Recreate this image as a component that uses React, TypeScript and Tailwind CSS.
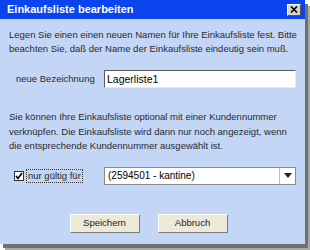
import { useState } from 'react';

export default function App() {
  const [name, setName] = useState('Lagerliste1');
  const [onlyFor, setOnlyFor] = useState(true); // Kundennummer-Filter aktiv

  return (
    <div className="w-[310px] h-[250px] bg-white font-['Liberation_Sans',Arial,sans-serif] text-[9.5px] text-[#2a2a2a]">
      <div className="w-[305px] h-[244px] flex flex-col bg-[#c3d6f6] shadow-[3px_4px_0_#707070,5px_6px_0_#a8a8a8]">
        {/* Title bar */}
        <div className="h-[19px] flex items-center justify-between bg-[#0a44ec] pl-[7px] pr-[4px]">
          <span className="text-white font-bold text-[11px] leading-none">Einkaufsliste bearbeiten</span>
          <button className="w-[14px] h-[12px] flex items-center justify-center bg-[#d6d3ce] border border-t-white border-l-white border-b-[#555] border-r-[#555]">
            <svg width="8" height="7" viewBox="0 0 8 7">
              <path d="M1 0.5 L7 6.5 M7 0.5 L1 6.5" stroke="#000" strokeWidth="1.6" />
            </svg>
          </button>
        </div>

        {/* Body */}
        <div className="flex flex-col px-[9px]">
          <p className="mt-[9px] leading-[14px] whitespace-nowrap">
            Legen Sie einen einen neuen Namen für Ihre Einkaufsliste fest. Bitte
            <br />
            beachten Sie, daß der Name der Einkaufsliste eindeutig sein muß.
          </p>

          <div className="mt-[14px] flex items-center h-[18px]">
            <span className="w-[95px] pl-[7px] whitespace-nowrap">neue Bezeichnung</span>
            <input
              value={name}
              onChange={(e) => setName(e.target.value)}
              className="w-[192px] h-[18px] bg-white px-[2px] text-[10.5px] text-black outline-none border-[1.5px] border-t-[#5a5a5a] border-l-[#5a5a5a] border-b-[#e8e8e8] border-r-[#e8e8e8]"
            />
          </div>

          <p className="mt-[22px] leading-[14.5px] whitespace-nowrap">
            Sie können Ihre Einkaufsliste optional mit einer Kundennummer
            <br />
            verknüpfen. Die Einkaufsliste wird dann nur noch angezeigt, wenn
            <br />
            die entsprechende Kundennummer ausgewählt ist.
          </p>

          <div className="mt-[13px] flex items-center h-[18px]">
            <div className="w-[95px] flex items-center pl-[5px]">
              <button
                onClick={() => setOnlyFor(!onlyFor)}
                className="w-[10px] h-[10px] bg-white border border-[#333] flex items-center justify-center"
              >
                {onlyFor && (
                  <svg width="8" height="8" viewBox="0 0 8 8">
                    <path d="M1 4 L3 6.5 L7 1" fill="none" stroke="#000" strokeWidth="1.6" />
                  </svg>
                )}
              </button>
              <span className="ml-[2px] px-[1px] border border-dotted border-[#333] leading-[12px] whitespace-nowrap">nur gültig für</span>
            </div>
            <div className="w-[192px] h-[18px] flex bg-white border border-[#8a8a8a]">
              <span className="flex-1 pl-[3px] leading-[16px] text-[10px] text-black">(2594501 - kantine)</span>
              <span className="w-[16px] flex items-center justify-center border-l border-[#bbb]">
                <svg width="8" height="5" viewBox="0 0 8 5">
                  <path d="M0 0 H8 L4 5 Z" fill="#222" />
                </svg>
              </span>
            </div>
          </div>

          <div className="mt-[29px] flex justify-center gap-[18px] pr-[8px]">
            <button className="w-[70px] h-[19px] bg-[#ece9d8] border border-t-white border-l-white border-b-[#7a7a7a] border-r-[#7a7a7a] text-[9.5px] text-[#222]">
              Speichern
            </button>
            <button className="w-[70px] h-[19px] bg-[#ece9d8] border border-t-white border-l-white border-b-[#7a7a7a] border-r-[#7a7a7a] text-[9.5px] text-[#222]">
              Abbruch
            </button>
          </div>
        </div>
      </div>
    </div>
  );
}
